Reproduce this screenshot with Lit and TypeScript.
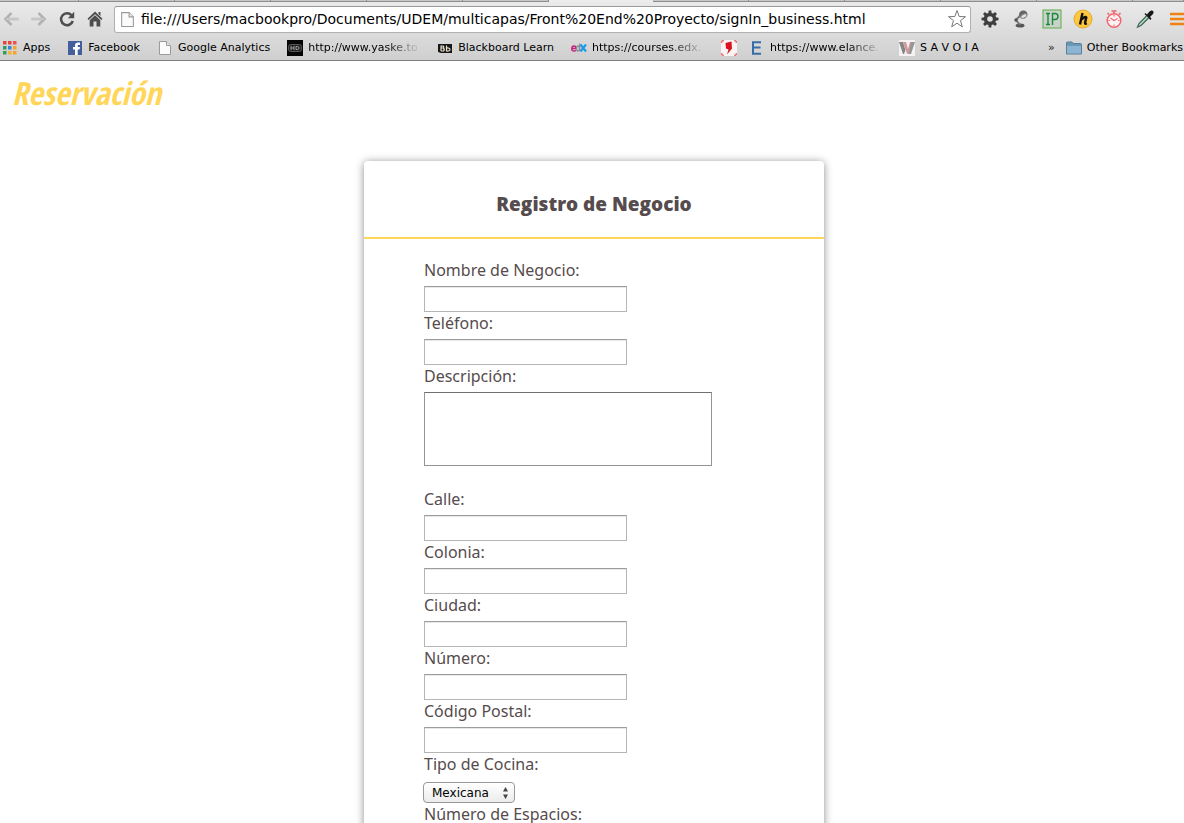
import { LitElement, html, css, svg, nothing, TemplateResult } from "lit";
import { customElement } from "lit/decorators.js";

const pageGlyph = svg`<path d="M2.5 1.5h7l4 4v9h-11z" fill="#fbfbfb" stroke="#9a9a9a"/><path d="M9.5 1.5v4h4" fill="#e8e8e8" stroke="#9a9a9a"/>`;

const icon = (content: unknown, size = 16) =>
  html`<svg class="icon" width=${size} height=${size} viewBox="0 0 16 16" aria-hidden="true">${content}</svg>`;

const appColors = ["#e8453c", "#e8453c", "#f0524a", "#2f9e5b", "#3b82e0", "#f5a623", "#2f9e5b", "#f5b02e", "#f5a033"];
const appsGlyph = appColors.map(
  (c, i) => svg`<rect x=${1 + (i % 3) * 5} y=${1 + Math.floor(i / 3) * 5} width="3.500" height="3.500" fill=${c}/>`
);

interface Bookmark {
  label: string;
  glyph: unknown;
  faded?: boolean;
}

const bookmarks: Bookmark[] = [
  { label: "Apps", glyph: appsGlyph },
  {
    label: "Facebook",
    glyph: svg`<rect x="1" y="1" width="14" height="14" fill="#43609c"/><path d="M8 15V9.500H6V7h2V5.500C8 3.300 9.300 2.500 11 2.500h2V5h-1.300C11 5 10.700 5.300 10.700 6v1H13l-.4 2.500h-1.900V15z" fill="#fff"/>`,
  },
  { label: "Google Analytics", glyph: pageGlyph },
  {
    label: "http://www.yaske.to",
    faded: true,
    glyph: svg`<rect width="16" height="16" fill="#050505"/><rect x="1.500" y="4.500" width="13" height="7" rx="2" fill="#222" stroke="#555"/><path d="M4 6v4M7 6v4M4 8h3M9 6.500v3h1.500q1.500 0 1.500-1.500t-1.500-1.500z" fill="none" stroke="#aaa" stroke-width=".9"/>`,
  },
  {
    label: "Blackboard Learn",
    glyph: svg`<path d="M1 4h14v9H4l-3-1z" fill="#171717"/><path d="M4 5.500v5.500M4 6h2q1.500 1 0 2H4h2.500q1.500 1.500 0 3H4M9.500 5.500V11q3.500.3 3.500-1.500T9.500 8" fill="none" stroke="#e8e2cc" stroke-width="1.200"/>`,
  },
  {
    label: "https://courses.edx.",
    faded: true,
    glyph: svg`<path d="M1 8.500h4.200Q5 6 3 6T.8 8.500 3 11q1.300 0 2-.8" fill="none" stroke="#c2257c" stroke-width="1.500"/><path d="M8.700 3.500V11M8.500 8.500Q8.500 6 7 6T5.500 8.500 7 11t1.500-2.500" fill="none" stroke="#8c8c98" stroke-width="1.300"/><path d="M9.500 4.500l5.500 7M15 4.500l-5.500 7" stroke="#1c9be8" stroke-width="2.200"/>`,
  },
  {
    label: "",
    glyph: svg`<rect width="16" height="16" fill="#f8f4f3"/><path d="M4.500 3l6-1.500.5 7L6 14.500l1.500-5-2.500-1z" fill="#d9141d"/><path d="M3 .8H.8V3M13 .8h2.200V3M.8 13v2.200H3M15.200 13v2.200H13" fill="none" stroke="#e0484d" stroke-width="1"/>`,
  },
  {
    label: "https://www.elance.",
    faded: true,
    glyph: svg`<path d="M12 2.200H4v11.600H12M4 7.500h7.500" fill="none" stroke="#376da6" stroke-width="2"/>`,
  },
  {
    label: "S A V O I A",
    glyph: svg`<rect width="16" height="16" fill="#f4f2f2"/><path d="M0 2h4l2.500 8L5 14H4z" fill="#858585"/><path d="M4 2h3l2 7 2-7h2L9.500 14H8z" fill="#d29a9c"/><path d="M12 2h4l-4 12H9.500z" fill="#9a9595"/>`,
  },
];

const bookmarkLink = (b: Bookmark) => html`
  <a class=${b.label ? "bookmark" : "bookmark bare"} href="#" aria-label=${b.label || "Marcador"}>
    ${icon(b.glyph)}
    ${b.label ? html`<span class=${b.faded ? "faded" : ""}>${b.label}</span>` : nothing}
  </a>`;

@customElement("browser-chrome")
class BrowserChrome extends LitElement {
  static styles = css`
    :host {
      display: block;
      background: linear-gradient(#ebebeb, #cfcfcf);
      border-bottom: 1px solid #7e7e7e;
      color: #000;
    }
    .tabs {
      display: grid;
      grid-template-columns: 79px repeat(4, 96px) 86px 104px repeat(5, 96px) 1fr;
      height: 2px;
    }
    .tab {
      background: #c6c6c6;
      border-bottom: 1px solid #8e8e8e;
      border-right: 1px solid #8e8e8e;
      box-sizing: border-box;
    }
    .tab.active {
      background: #ececec;
      border-color: #ececec;
    }
    .toolbar {
      display: flex;
      align-items: center;
      height: 34px;
      box-sizing: border-box;
    }
    button {
      border: 0;
      padding: 0;
      background: none;
      display: grid;
      place-items: center;
    }
    svg {
      display: block;
      flex: none;
    }
    .nav {
      display: flex;
      gap: 8px;
      padding: 0 9px 0 1px;
    }
    .nav button {
      width: 20px;
      height: 24px;
    }
    .address {
      flex: 1;
      min-width: 0;
      display: flex;
      align-items: center;
      box-sizing: border-box;
      height: 27px;
      padding: 0 3px 0 4px;
      gap: 5px;
      background: #fff;
      border: 1px solid #b0b0b0;
      border-top-color: #999;
      border-radius: 3px;
    }
    .address input {
      flex: 1;
      min-width: 0;
      border: 0;
      padding: 0;
      outline: 0;
      background: none;
      color: #000;
      font: 14px/22px "DejaVu Sans", sans-serif;
    }
    .extensions {
      display: flex;
      gap: 11px;
      padding-left: 9px;
    }
    .extensions button {
      width: 20px;
      height: 24px;
    }
    .extensions .menu {
      width: 18px;
      justify-items: end;
    }
    .bookmarks {
      display: flex;
      align-items: center;
      height: 24px;
      gap: 17px;
      padding: 0 1px 0 2px;
      font: 11px/16px "DejaVu Sans", sans-serif;
    }
    .bookmark {
      display: flex;
      align-items: center;
      gap: 5px;
      color: inherit;
      text-decoration: none;
      white-space: nowrap;
    }
    .bare {
      margin-right: -5px;
    }
    .faded {
      width: 112px;
      overflow: hidden;
      mask-image: linear-gradient(90deg, #000 70%, transparent);
    }
    .more {
      margin-left: auto;
      font: inherit;
      color: #222;
    }
    .other {
      margin-left: -6px;
    }
  `;

  private extension(label: string, glyph: TemplateResult | unknown) {
    return html`<button aria-label=${label}>
      <svg width="20" height="20" viewBox="0 0 20 20" aria-hidden="true">${glyph}</svg>
    </button>`;
  }

  render() {
    const teeth = [0, 45, 90, 135, 180, 225, 270, 315];
    return html`
      <div class="tabs">
        ${[0, 1, 2, 3, 4, 5, 6, 7, 8, 9, 10, 11, 12].map((i) => html`<span class=${i === 6 ? "tab active" : "tab"}></span>`)}
      </div>
      <div class="toolbar">
        <div class="nav">
          <button aria-label="Atrás">
            <svg width="18" height="18" viewBox="0 0 18 18"><path d="M16.500 9H4M9.500 3L3.500 9l6 6" fill="none" stroke="#b2b2b2" stroke-width="2.600"/><path d="M16 9H4" stroke="#dcdcdc"/></svg>
          </button>
          <button aria-label="Adelante">
            <svg width="18" height="18" viewBox="0 0 18 18"><path d="M1.500 9H14M8.500 3l6 6-6 6" fill="none" stroke="#b2b2b2" stroke-width="2.600"/><path d="M2 9h12" stroke="#dcdcdc"/></svg>
          </button>
          <button aria-label="Recargar">
            <svg width="18" height="18" viewBox="0 0 18 18"><path d="M13.600 5.200A6 6 0 1 0 14.800 11" fill="none" stroke="#4e4e4e" stroke-width="2.500"/><path d="M16.200 1.800v6.400H9.800z" fill="#4e4e4e"/></svg>
          </button>
          <button aria-label="Inicio">
            <svg width="18" height="18" viewBox="0 0 18 18"><path d="M9 1.500l7.500 7.300-1.200 1.300L9 4.200l-6.300 5.900-1.200-1.300zM12.500 2h2v4l-2-2z" fill="#4e4e4e"/><path d="M3.700 10.300L9 5.300l5.300 5V16.500H10.500v-5h-3v5H3.700z" fill="#4e4e4e"/></svg>
          </button>
        </div>
        <div class="address">
          ${icon(pageGlyph, 17)}
          <input aria-label="Dirección" value="file:///Users/macbookpro/Documents/UDEM/multicapas/Front%20End%20Proyecto/signIn_business.html" />
          <button aria-label="Favorito">
            <svg width="20" height="20" viewBox="0 0 20 20"><path d="M10 1.500l2.200 6 6.300.2-5 3.900 1.800 6.200-5.300-3.600-5.300 3.600 1.800-6.200-5-3.900 6.300-.2z" fill="#fff" stroke="#777" stroke-linejoin="round"/></svg>
          </button>
        </div>
        <div class="extensions">
          ${this.extension(
            "Ajustes",
            svg`${teeth.map((a) => svg`<path d="M8.300 5L8.700 1.500h2.600l.4 3.500z" fill="#3f3f3f" transform=${`rotate(${a} 10 10)`}/>`)}<circle cx="10" cy="10" r="4.500" fill="none" stroke="#3f3f3f" stroke-width="3.400"/>`
          )}
          ${this.extension(
            "Lámpara",
            svg`<ellipse cx="9" cy="16.500" rx="4.500" ry="2" fill="#555"/><path d="M9 16l-4-5 5.500-6" fill="none" stroke="#777" stroke-width="2"/><path d="M8 5q1-4 5-3.500 3.500.5 3.500 4.500l-3 3.500-4.500-1z" fill="#666"/><ellipse cx="12.800" cy="7" rx="3.200" ry="1.800" fill="#e6e6e6" stroke="#888" transform="rotate(-25 13 7)"/><circle cx="5" cy="11" r="1.700" fill="#555"/>`
          )}
          ${this.extension(
            "IP",
            svg`<rect x="1" y="1" width="18" height="18" fill="#c9d2c9" stroke="#59ae48"/><path d="M4 4.500h4M6 4.500v11M4 15.500h4M10.500 16V4.500h2.500q3 0 3 3t-3 3h-2.500" fill="none" stroke="#17883a" stroke-width="1.400"/>`
          )}
          ${this.extension(
            "Herramienta h",
            svg`<circle cx="10" cy="10" r="9" fill="#fdc83d" stroke="#e3a83a"/><path d="M9.500 4L7 15.500M8 11q4.500-4.500 5.300-2.500L12 14q0 1.300 1.800.3" fill="none" stroke="#111" stroke-width="2.400"/>`
          )}
          ${this.extension(
            "Temporizador",
            svg`<circle cx="10" cy="11.500" r="6.800" fill="#fff1f1" stroke="#ef6670" stroke-width="1.500"/><path d="M7.500 2h5M10 2v3M3.500 4L5 5.500M16.500 4L15 5.500" fill="none" stroke="#ef6670" stroke-width="1.700"/><path d="M10 6v1.500M10 15.500V17M4.500 11.500H6M14 11.500h1.500M6.500 9l3.500 2.500 3.500-2" fill="none" stroke="#ef6670" stroke-width="1.100"/>`
          )}
          ${this.extension(
            "Cuentagotas",
            svg`<path d="M11.500 7L4 14.500 2.500 18l3.500-1.500L13.500 9" fill="#bcd8c9" stroke="#386652" stroke-width="1.200"/><path d="M9.500 5l6 6 1-1.500-1.500-1.500L18 5q1.500-3-1-3.500-1.500-.5-3 1.500L12 5.500 10.500 4z" fill="#181818"/>`
          )}
          <button class="menu" aria-label="Menú">
            <svg width="15" height="20" viewBox="0 0 15 20"><path d="M1 5h14M1 10h14M1 15h14" stroke="#ef8213" stroke-width="2.600"/></svg>
          </button>
        </div>
      </div>
      <nav class="bookmarks">
        ${bookmarks.map(bookmarkLink)}
        <button class="more" aria-label="Más marcadores">»</button>
        <span class="other">
          ${bookmarkLink({
            label: "Other Bookmarks",
            glyph: svg`<path d="M.5 3q0-1 1-1h4.500l1 1.500h7.500q1 0 1 1V14H.5z" fill="#6c97b7" stroke="#587f9c"/><path d="M1 6h14v7.500H1z" fill="#8db4d0"/>`,
          })}
        </span>
      </nav>
    `;
  }
}

interface Field {
  id: string;
  label: string;
  kind: "text" | "area" | "select";
}

const fields: Field[] = [
  { id: "nombre", label: "Nombre de Negocio:", kind: "text" },
  { id: "telefono", label: "Teléfono:", kind: "text" },
  { id: "descripcion", label: "Descripción:", kind: "area" },
  { id: "calle", label: "Calle:", kind: "text" },
  { id: "colonia", label: "Colonia:", kind: "text" },
  { id: "ciudad", label: "Ciudad:", kind: "text" },
  { id: "numero", label: "Número:", kind: "text" },
  { id: "postal", label: "Código Postal:", kind: "text" },
  { id: "cocina", label: "Tipo de Cocina:", kind: "select" },
  { id: "espacios", label: "Número de Espacios:", kind: "text" },
];

@customElement("app-root")
class AppRoot extends LitElement {
  static styles = css`
    :host {
      display: flex;
      flex-direction: column;
      height: 100vh;
      overflow: hidden;
      background: #fff;
      color: #564b4d;
      font: 16px/18px "Noto Sans", "Open Sans", sans-serif;
    }
    browser-chrome {
      flex: none;
    }
    main {
      flex: 1;
      min-height: 0;
      overflow-y: auto;
      scrollbar-width: none;
      padding: 8px 8px 0 12px;
    }
    .logo {
      display: block;
      width: fit-content;
      color: #ffd659;
      text-decoration: none;
      font: italic bold 32px/48px "Open Sans Condensed", "Open Sans", sans-serif;
    }
    .card {
      max-width: 460px;
      margin: 44px auto 0;
      border-radius: 4px;
      background: #fff;
      box-shadow: 0 1px 8px rgba(0, 0, 0, 0.45);
    }
    h1 {
      margin: 0;
      padding: 29px 0 19px;
      border-bottom: 2px solid #ffd659;
      text-align: center;
      font: 800 19px/28px "Open Sans", sans-serif;
    }
    form {
      padding: 20px 60px 40px;
    }
    label {
      display: block;
      padding: 2px 0 7px;
    }
    input,
    textarea,
    select {
      display: block;
      box-sizing: border-box;
      margin: 0;
      border-radius: 0;
      font: inherit;
    }
    input {
      width: 203px;
      height: 26px;
      border: 1px solid #b5b5b5;
      border-top-color: #9c9c9c;
      box-shadow: inset 0 1px 0 #e8e8e8;
    }
    textarea {
      width: 288px;
      height: 74px;
      margin-bottom: 22px;
      border: 1px solid #959595;
      border-top-color: #707070;
      resize: none;
    }
    .picker {
      position: relative;
      width: 92px;
      margin: 2px 0 0 -1px;
    }
    select {
      appearance: none;
      width: 100%;
      height: 21px;
      padding: 0 8px;
      border: 1px solid #999;
      border-radius: 4px;
      background: linear-gradient(#fff, #ececec);
      color: #000;
      font: 12px/18px "DejaVu Sans", sans-serif;
    }
    .arrows {
      position: absolute;
      right: 6px;
      top: 5px;
      pointer-events: none;
    }
  `;

  private control(f: Field) {
    if (f.kind === "area") return html`<textarea id=${f.id}></textarea>`;
    if (f.kind === "select")
      return html`<div class="picker">
        <select id=${f.id}><option>Mexicana</option></select>
        <svg class="arrows" width="7" height="12" viewBox="0 0 7 12" aria-hidden="true">
          <path d="M3.500 0L6 4.500H1zM3.500 12L1 7.500h5z" fill="#444" />
        </svg>
      </div>`;
    return html`<input id=${f.id} type="text" />`;
  }

  render() {
    return html`
      <browser-chrome></browser-chrome>
      <main>
        <a class="logo" href="#">Reservación</a>
        <section class="card">
          <h1>Registro de Negocio</h1>
          <form>${fields.map((f) => html`<label for=${f.id}>${f.label}</label>${this.control(f)}`)}</form>
        </section>
      </main>
    `;
  }
}
